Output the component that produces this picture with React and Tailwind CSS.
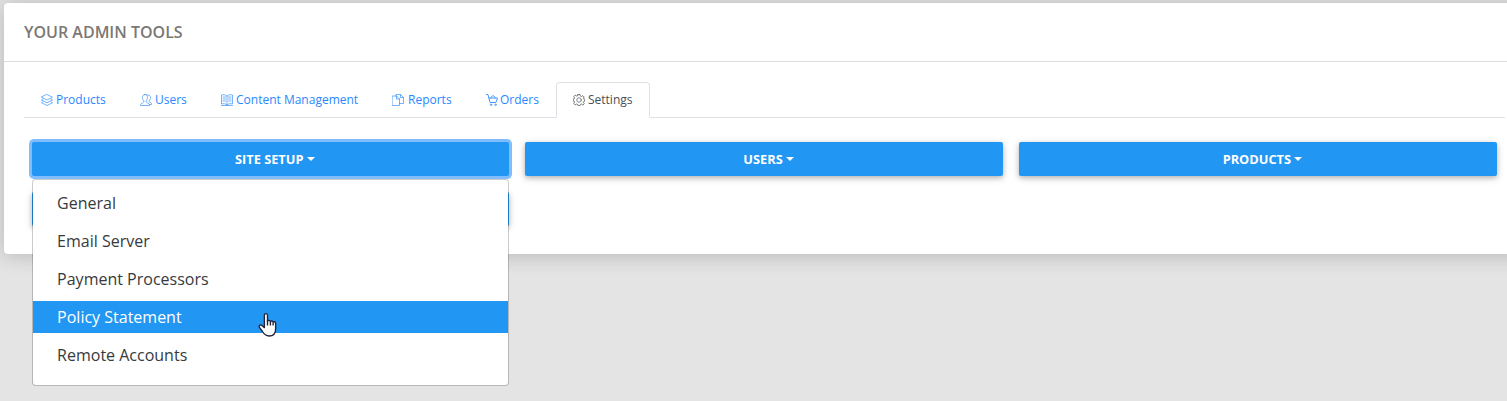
import { useState } from "react";

function Icon({ children }) {
  return (
    <svg
      viewBox="0 0 24 24"
      className="h-3 w-3 shrink-0"
      fill="none"
      stroke="currentColor"
      strokeWidth="1.3"
      strokeLinejoin="round"
      strokeLinecap="round"
    >
      {children}
    </svg>
  );
}

const tabs = [
  {
    name: "Products",
    width: "w-[99px]",
    gap: "gap-[3px]",
    icon: (
      <>
        <path d="M12 1 23 6.500 12 12 1 6.500Z" />
        <path d="M4 10 1 12l11 5.500L23 12l-3-2" />
        <path d="M4 15.500 1 17.500 12 23l11-5.500-3-2" />
      </>
    ),
  },
  {
    name: "Users",
    width: "w-[81px]",
    gap: "gap-[3px]",
    icon: (
      <>
        <path d="M10 1c-4 0-5 3-5 6s1 5 3 7c0 2-1 3-3 4s-4 1-4 5h18c0-4-2-4-4-5s-3-2-3-4c2-2 3-4 3-7s-1-6-5-6Z" />
        <path d="M14 2c4-1 7 1 7 5 0 3-1 5-3 7 0 2 1 2 3 3s2 2 2 4h-4" />
      </>
    ),
  },
  {
    name: "Content Management",
    width: "w-[171px]",
    gap: "gap-[3px]",
    icon: (
      <>
        <path d="M12 4C9 1 4 1 1 2v18c4-1 8-1 11 2 3-3 7-3 11-2V2c-3-1-8-1-11 2v18" />
        <path d="M4 6h5M4 10h5M4 14h5M15 6h5M15 10h5M15 14h5M1 23h22" />
      </>
    ),
  },
  {
    name: "Reports",
    width: "w-[94px]",
    gap: "gap-1",
    icon: (
      <>
        <path d="M8 4V1h9l6 6v12h-8" />
        <path d="M17 1v6h6M1 4h8l6 6v13H1ZM9 4v6h6" />
      </>
    ),
  },
  {
    name: "Orders",
    width: "w-[87px]",
    gap: "gap-0.5",
    icon: (
      <>
        <path d="M1 1h3l4 16h12l3-9H6M10 8c0-6 8-6 8 0" strokeWidth="1.700" />
        <circle cx="10" cy="21.500" r="1.500" />
        <circle cx="19" cy="21.500" r="1.500" />
      </>
    ),
  },
  {
    name: "Settings",
    width: "w-[94px]",
    gap: "gap-[3px]",
    icon: (
      <>
        <path
          d="M10 1h4l.7 3 2.300 1 2.700-1.700 2.800 2.800L20.800 8l1 2.200 2 .3v3.500l-2 .5-1 2.300 1.700 2.700-2.800 2.800L17 20l-2.300 1-.7 2.500h-4L9.300 21 7 20l-2.700 1.800-2.800-2.800 1.700-2.700-1-2.300-2-.5V10l2-.3 1-2.200-1.700-2.400 2.800-2.800L7 4l2.300-1Z"
          strokeWidth="1.500"
        />
        <circle cx="12" cy="12" r="4.500" />
      </>
    ),
  },
];

const setupItems = [
  "General",
  "Email Server",
  "Payment Processors",
  "Policy Statement",
  "Remote Accounts",
];

function MenuButton({ label, open, onClick }) {
  return (
    <button
      onClick={onClick}
      className={
        "flex h-[34px] w-full items-center justify-center rounded-[2px] bg-[#2196f3] pl-[8.5px] pt-px text-[12.8px] font-bold text-white " +
        (open
          ? "shadow-[0_0_0_3px_#80bdff]"
          : "shadow-[0_2px_5px_rgba(0,0,0,0.22),0_2px_10px_rgba(0,0,0,0.12)]")
      }
    >
      {label}
      <span className="-mt-px ml-[3px] border-x-4 border-t-4 border-x-transparent border-t-white" />
    </button>
  );
}

function Pointer() {
  return (
    <svg
      viewBox="0 0 18 24"
      className="pointer-events-none absolute left-[225px] top-[11px] h-[25px] w-[19px]"
      fill="#fff"
      stroke="#222238"
      strokeWidth="1.3"
      strokeLinejoin="round"
    >
      <path d="M6 14V3.200C6 1 9 1 9 3.200V9c0-1.300 2.800-1.300 2.800.5 0-1.300 2.600-1.200 2.600.5 0-1.100 2.400-1 2.400 1v5c0 4-2 7-6.300 7-3.500 0-5-2-6.500-4.500L1.300 14.800C.3 13 2.300 11.700 3.700 13L6 15Z" />
      <path d="M9 8.500V13M11.800 9.500V13M14.400 10.500V13" />
    </svg>
  );
}

export default function App() {
  const [active, setActive] = useState("Settings");
  const [open, setOpen] = useState(true);

  return (
    <div className="h-[401px] overflow-hidden bg-[#e4e4e4] pl-1 pt-[3px] font-['Open_Sans',sans-serif]">
      <div className="h-[251px] w-[1525px] rounded-[4px] bg-white shadow-[0_1px_20px_1px_rgba(0,0,0,0.19)]">
        <div className="flex h-[59px] items-center border-b border-[#dedede] px-5">
          <h4 className="text-base font-semibold text-[#7b7875]">YOUR ADMIN TOOLS</h4>
        </div>

        <div className="ml-5 w-[1481px] pt-5">
          {/* tabs */}
          <div className="flex h-9 border-b border-[#dee2e6]">
            {tabs.map((tab) => (
              <button
                key={tab.name}
                onClick={() => setActive(tab.name)}
                className={
                  "flex h-9 items-center whitespace-nowrap rounded-t-[4px] border pl-4 text-[12px] " +
                  tab.width +
                  " " +
                  tab.gap +
                  (active === tab.name
                    ? " border-[#dee2e6] border-b-white bg-white text-[#495057]"
                    : " border-transparent text-[#2988ff]")
                }
              >
                <Icon>{tab.icon}</Icon>
                {tab.name}
              </button>
            ))}
          </div>

          <div className="grid grid-cols-3 gap-4 pl-[7.6px] pr-2 pt-6">
            <div className="relative">
              <MenuButton label="SITE SETUP" open={open} onClick={() => setOpen(!open)} />
              {open && (
                <div className="absolute left-0 top-[37px] z-10 flex h-[207px] w-[477px] flex-col gap-1.5 rounded-[4px] border border-black/20 bg-white bg-clip-padding pt-[7px]">
                  {setupItems.map((item) => (
                    <a
                      key={item}
                      className={
                        "relative flex h-8 shrink-0 items-center pl-[24.5px] text-base " +
                        (item === "Policy Statement" ? "bg-[#2196f3] text-white" : "text-[#373a3c]")
                      }
                    >
                      {item}
                      {item === "Policy Statement" && <Pointer />}
                    </a>
                  ))}
                </div>
              )}
            </div>
            <MenuButton label="USERS" />
            <MenuButton label="PRODUCTS" />
            <MenuButton label="" />
          </div>
        </div>
      </div>
    </div>
  );
}
